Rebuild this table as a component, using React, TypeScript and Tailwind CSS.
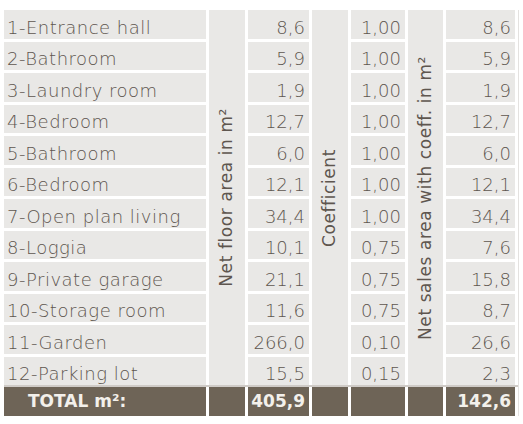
const rows: [string, string, string, string][] = [
  ['1-Entrance hall', '8,6', '1,00', '8,6'],
  ['2-Bathroom', '5,9', '1,00', '5,9'],
  ['3-Laundry room', '1,9', '1,00', '1,9'],
  ['4-Bedroom', '12,7', '1,00', '12,7'],
  ['5-Bathroom', '6,0', '1,00', '6,0'],
  ['6-Bedroom', '12,1', '1,00', '12,1'],
  ['7-Open plan living', '34,4', '1,00', '34,4'],
  ['8-Loggia', '10,1', '0,75', '7,6'],
  ['9-Private garage', '21,1', '0,75', '15,8'],
  ['10-Storage room', '11,6', '0,75', '8,7'],
  ['11-Garden', '266,0', '0,10', '26,6'],
  ['12-Parking lot', '15,5', '0,15', '2,3'],
];

// light grey body cells, text nudged down a bit like the original
const cell = 'bg-[#e9e8e6] flex items-center pt-[6px] text-[18px] font-light';
const num = `${cell} justify-end pr-[4px]`;
const cols = 'grid grid-cols-[202px_36px_61px_36px_54px_35px_69px] gap-x-[3px]';

function VerticalLabel({ children }: { children: React.ReactNode }) {
  return (
    <div className="bg-[#e9e8e6] row-span-12 flex items-center justify-center">
      <span className="[writing-mode:vertical-rl] rotate-180 whitespace-nowrap text-[17px] tracking-[0.6px]">
        {children}
      </span>
    </div>
  );
}

export default function App() {
  return (
    <div
      className="w-[523px] h-[424px] bg-white pt-[10px] pl-[4px] text-[#5e564f]"
      style={{ fontFamily: '"DejaVu Sans", "Noto Sans", sans-serif' }}
    >
      <div className="w-[515px] border-r border-[#e4e2e0]">
        <div className={`${cols} grid-rows-[repeat(12,28.5px)] gap-y-[3px]`}>
          {rows.map(([name, area, coef, sales], i) => (
            <>
              <div key={`n${i}`} className={`${cell} pl-[3px] tracking-[0.5px]`}>
                {name}
              </div>
              {i === 0 && <VerticalLabel>Net floor area in m²</VerticalLabel>}
              <div key={`a${i}`} className={num}>
                {area}
              </div>
              {i === 0 && <VerticalLabel>Coefficient</VerticalLabel>}
              <div key={`c${i}`} className={num}>
                {coef}
              </div>
              {i === 0 && <VerticalLabel>Net sales area with coeff. in m²</VerticalLabel>}
              <div key={`s${i}`} className={num}>
                {sales}
              </div>
            </>
          ))}
        </div>
        <div className="h-[2px] bg-[#cfcbc7]" />
        <div className={`${cols} h-[29px] text-[#f3f0eb] font-bold text-[17px]`}>
          <div className="bg-[#6e6457] flex items-center pl-[24px]">TOTAL m²:</div>
          <div className="bg-[#6e6457]" />
          <div className="bg-[#6e6457] flex items-center justify-end pr-[4px]">405,9</div>
          <div className="bg-[#6e6457]" />
          <div className="bg-[#6e6457]" />
          <div className="bg-[#6e6457]" />
          <div className="bg-[#6e6457] flex items-center justify-end pr-[4px]">142,6</div>
        </div>
      </div>
    </div>
  );
}
